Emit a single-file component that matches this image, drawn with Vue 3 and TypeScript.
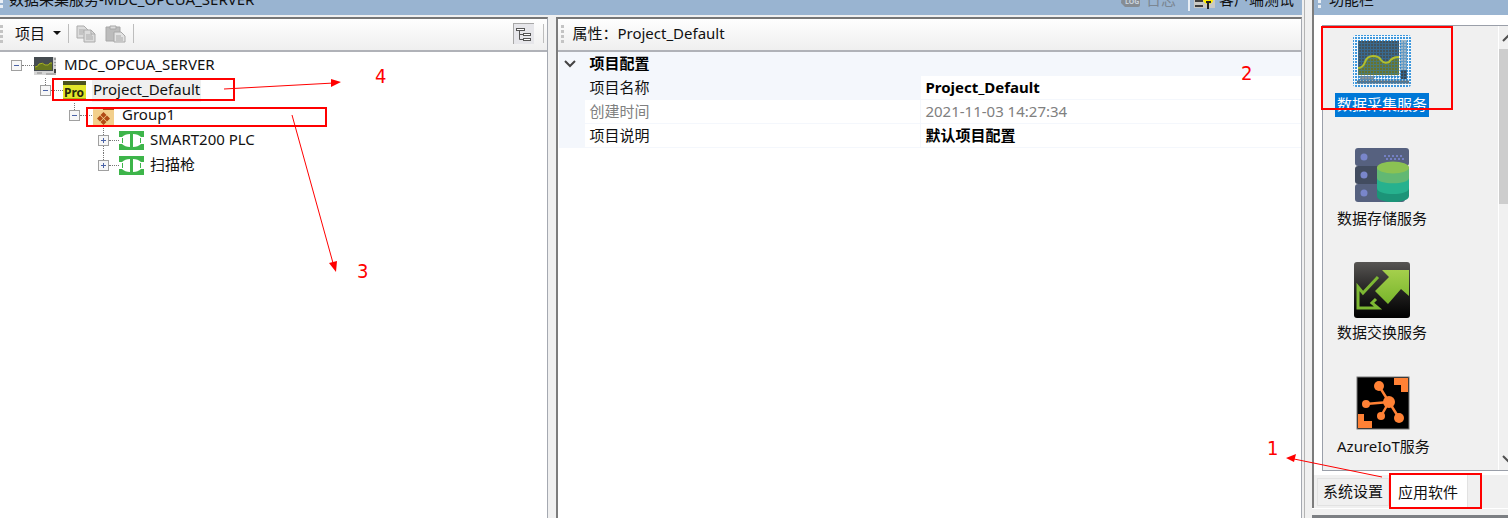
<script setup lang="ts">
import { computed, ref } from 'vue'

interface TreeNode {
  id: string
  label: string
  level: number
  icon: 'server' | 'project' | 'group' | 'device'
  parents: string[]
  hasChildren: boolean
  lineBelow?: boolean
}

interface Service {
  id: string
  label: string
}

const nodes: TreeNode[] = [
  { id: 'server', label: 'MDC_OPCUA_SERVER', level: 0, icon: 'server', parents: [], hasChildren: true },
  { id: 'project', label: 'Project_Default', level: 1, icon: 'project', parents: ['server'], hasChildren: true },
  { id: 'group', label: 'Group1', level: 2, icon: 'group', parents: ['server', 'project'], hasChildren: true },
  { id: 'plc', label: 'SMART200 PLC', level: 3, icon: 'device', parents: ['server', 'project', 'group'], hasChildren: false, lineBelow: true },
  { id: 'scanner', label: '扫描枪', level: 3, icon: 'device', parents: ['server', 'project', 'group'], hasChildren: false },
]

const services: Service[] = [
  { id: 'collect', label: '数据采集服务' },
  { id: 'store', label: '数据存储服务' },
  { id: 'exchange', label: '数据交换服务' },
  { id: 'azure', label: 'AzureIoT服务' },
]

const collapsed = ref<string[]>([])
const selectedNode = ref('project')
const selectedService = ref('collect')
const activeTab = ref('apps')
const configOpen = ref(true)

const visibleNodes = computed(() =>
  nodes.filter((n) => !n.parents.some((p) => collapsed.value.includes(p))),
)

function isOpen(n: TreeNode): boolean {
  return n.hasChildren && !collapsed.value.includes(n.id)
}

function toggle(n: TreeNode): void {
  if (!n.hasChildren) return
  collapsed.value = collapsed.value.includes(n.id)
    ? collapsed.value.filter((id) => id !== n.id)
    : [...collapsed.value, n.id]
}
</script>

<template>
  <div class="page">
    <main class="workspace">
      <header class="titlebar">
        <span class="grip"></span>
        <h1>数据采集服务-MDC_OPCUA_SERVER</h1>
        <button class="title-btn" disabled>
          <svg width="22" height="20" viewBox="0 0 22 20">
            <path d="M2 2h14l4 3v11q0 2-2 2H5l-4-4z" fill="#868c93" />
            <text x="5" y="15" font-size="7" font-weight="700" fill="#c9d2dc">LOG</text>
          </svg>
          <span>日志</span>
        </button>
        <span class="title-sep"></span>
        <button class="title-btn client">
          <svg width="21" height="20" viewBox="0 0 21 20">
            <rect y="0" width="21" height="19" fill="#c9c9c4" />
            <path d="M1 7h8M1 12h8M1 17h8" stroke="#111" stroke-width="1.6" />
            <path d="M9 6h10v6q-1 3-5 3t-5-4z" fill="#ffee00" />
            <path d="M12 13h5M14 13v7" stroke="#222" stroke-width="2" />
          </svg>
          <span>客户端测试</span>
        </button>
      </header>

      <div class="columns">
        <section class="tree-panel">
          <div class="toolbar">
            <span class="grip dark"></span>
            <button class="menu-btn">项目 <span class="caret"></span></button>
            <span class="sep"></span>
            <button class="icon-btn" aria-label="复制" disabled>
              <svg width="20" height="18" viewBox="0 0 20 18" fill="#dcdcdc" stroke="#ababab">
                <path d="M1 1h7l4 4v8H1z" />
                <path d="M3 5h5M3 7h5M3 9h4" />
                <path d="M8 5h7l4 4v8H8z" />
                <path d="M15 5v4h4M10 10h6M10 12h7M10 14h7" fill="none" />
              </svg>
            </button>
            <button class="icon-btn" aria-label="粘贴" disabled>
              <svg width="21" height="18" viewBox="0 0 21 18" fill="#bcbcbc" stroke="#a8a8a8">
                <path d="M1 2h14v14H1z" />
                <path d="M5 1h6v3H5z" fill="#ddd" />
                <path d="M9 7h7l4 4v6H9z" fill="#e3e3e3" />
                <path d="M11 11h5M11 13h7M11 15h7" />
              </svg>
            </button>
            <span class="sep"></span>
            <span class="fill"></span>
            <button class="view-btn" aria-label="树形视图">
              <svg width="18" height="18" viewBox="0 0 18 18" fill="#fff" stroke="#555">
                <path d="M4.500 6v8.500H9M4.500 9.500H9" fill="none" />
                <rect x="1.500" y="3.500" width="8" height="2" />
                <rect x="8.500" y="8.500" width="7" height="2" />
                <rect x="8.500" y="13.500" width="7" height="2" />
              </svg>
            </button>
            <span class="sep last"></span>
          </div>

          <ul class="tree">
            <li v-for="n in visibleNodes" :key="n.id" class="node" :class="'level-' + n.level">
              <span class="joint">
                <span class="vline" :class="{ off: n.level === 0 }"></span>
                <button class="expander" :aria-label="'展开或折叠 ' + n.label" @click="toggle(n)">
                  <svg width="11" height="11" viewBox="0 0 11 11">
                    <path d="M3 5.500h5" stroke="#4b63a7" />
                    <path v-if="!isOpen(n)" d="M5.500 3v5" stroke="#4b63a7" />
                  </svg>
                </button>
                <span class="vline" :class="{ off: !n.lineBelow }"></span>
              </span>
              <span class="hline"></span>
              <svg v-if="n.icon === 'server'" width="25" height="20" viewBox="0 0 25 20">
                <path d="M0 1h22v18H0z" fill="#d4d4d4" />
                <rect x="0" y="1" width="19" height="14" fill="#454b50" />
                <path d="M1 14V11q3 0 4-3q4-2 6 1q4 1 5-2h2v7z" fill="#66751f" />
                <path d="M1 11q3 0 4-3q4-2 6 1q4 1 5-2h2" fill="none" stroke="#a9b51f" />
                <path d="M21 2v2M21 6v1M21 9v1" stroke="#666" />
                <path d="M20 13h2v4h-2z" fill="#444" />
                <path d="M3 17h5M12 18h10" stroke="#888" />
              </svg>
              <svg v-else-if="n.icon === 'project'" width="25" height="20" viewBox="0 0 25 20">
                <rect x="0" y="0" width="23" height="20" rx="1" fill="#e3e72a" />
                <path d="M0 0h23v4H0z" fill="#4d541d" />
                <path d="M0 17h23v3H0z" fill="#a8b021" />
                <text x="1" y="16" font-size="12" font-weight="700" fill="#26280d">Pro</text>
              </svg>
              <svg v-else-if="n.icon === 'group'" width="25" height="20" viewBox="0 0 25 20">
                <rect x="1" y="1" width="21" height="19" fill="#f2cf8c" />
                <path d="M1 1h8l2 3H1z" fill="#ecd8ae" />
                <path d="M11 1h11v3H11z" fill="#a84b16" />
                <path d="M11.500 6l3 3-3 3-3-3zM8 9.500l3 3-3 3-3-3zM15 9.500l3 3-3 3-3-3zM11.500 13l3 3-3 3-3-3z" fill="#b04b15" />
              </svg>
              <svg v-else width="25" height="20" viewBox="0 0 25 20">
                <rect width="25" height="19" fill="#3db54a" />
                <path d="M0 6h3q3-3 8-3v13q-5 0-8-3H0v-1h4v-5H0z" fill="#fff" />
                <path d="M25 6h-3q-3-3-8-3v13q5 0 8-3h3v-1h-4v-5h4z" fill="#fff" />
                <path d="M0 7h3v5H0zM22 7h3v5h-3z" fill="#fff" />
              </svg>
              <button class="node-label" :class="{ selected: n.id === selectedNode }" @click="selectedNode = n.id">{{ n.label }}</button>
            </li>
          </ul>
        </section>

        <section class="props-panel">
          <div class="toolbar">
            <span class="grip dark"></span>
            <h2>属性：Project_Default</h2>
          </div>
          <div class="props-body">
            <table>
              <colgroup>
                <col class="col-gutter" />
                <col class="col-name" />
                <col />
              </colgroup>
              <thead>
                <tr>
                  <th class="gutter">
                    <button class="chevron" aria-label="折叠 项目配置" @click="configOpen = !configOpen">
                      <svg width="12" height="8" viewBox="0 0 12 8"><path d="M1 1l5 5 5-5" fill="none" stroke="#444" stroke-width="2" /></svg>
                    </button>
                  </th>
                  <th colspan="2" class="category">项目配置</th>
                </tr>
              </thead>
              <tbody v-if="configOpen">
                <tr class="current">
                  <td class="gutter"></td>
                  <th scope="row">项目名称</th>
                  <td class="strong">Project_Default</td>
                </tr>
                <tr class="readonly">
                  <td class="gutter"></td>
                  <th scope="row">创建时间</th>
                  <td>2021-11-03 14:27:34</td>
                </tr>
                <tr>
                  <td class="gutter"></td>
                  <th scope="row">项目说明</th>
                  <td class="strong">默认项目配置</td>
                </tr>
              </tbody>
            </table>
          </div>
        </section>
      </div>
    </main>

    <aside class="side">
      <div class="side-panel">
        <header class="titlebar">
          <span class="grip"></span>
          <h2>功能栏</h2>
        </header>
        <div class="service-box">
          <div class="services">
            <button v-for="s in services" :key="s.id" class="service" :class="{ selected: s.id === selectedService }" @click="selectedService = s.id">
              <svg v-if="s.id === 'collect'" width="60" height="56" viewBox="0 0 60 56">
                <defs>
                  <pattern id="dots" width="3" height="3" patternUnits="userSpaceOnUse">
                    <rect width="2" height="2" fill="#3c97dd" />
                  </pattern>
                  <pattern id="mesh" width="3" height="3" patternUnits="userSpaceOnUse">
                    <rect width="1" height="3" fill="#2f7fc0" />
                    <rect width="3" height="1" fill="#2f7fc0" />
                  </pattern>
                </defs>
                <rect x="1" y="1" width="58" height="52" rx="3" fill="#f4f8fb" />
                <rect x="1" y="1" width="58" height="52" rx="3" fill="url(#dots)" />
                <rect x="49" y="6" width="6" height="36" fill="#9fb6c6" />
                <rect x="6" y="7" width="41" height="34" fill="#42535c" />
                <path d="M6 34q5 0 7-6q2-6 8-6q6 0 8 4q3 4 8 2q3-5 10-5v18H6z" fill="#68742b" />
                <rect x="49" y="36" width="6" height="9" fill="#3d474e" />
                <path d="M5 48h52" stroke="#65727a" stroke-width="3" />
                <path d="M8 44h14" stroke="#8c9499" stroke-width="4" />
                <rect x="6" y="7" width="49" height="42" fill="url(#mesh)" opacity="0.500" />
                <path d="M6 34q5 0 7-6q2-6 8-6q6 0 8 4q3 4 8 2q3-5 10-5" fill="none" stroke="#b3c02c" stroke-width="2" />
              </svg>
              <svg v-else-if="s.id === 'store'" width="56" height="56" viewBox="0 0 56 56">
                <rect x="1" y="0" width="54" height="18" rx="3" fill="#56617f" />
                <rect x="1" y="18" width="54" height="18" rx="3" fill="#424c60" />
                <rect x="1" y="36" width="50" height="18" rx="3" fill="#56617f" />
                <g fill="#7986cb">
                  <circle cx="10" cy="9" r="3.500" />
                  <circle cx="10" cy="27" r="3.500" />
                  <circle cx="10" cy="45" r="3.500" />
                </g>
                <path d="M30 8h20M32 11h18" stroke="#7480c4" stroke-width="2" stroke-dasharray="2 2" />
                <path d="M23 40v8c0 8 32 8 32 0v-8z" fill="#1c9478" />
                <path d="M23 30v10c0 8 32 8 32 0V30z" fill="#26b18e" />
                <path d="M23 19v11c0 7 32 7 32 0V19z" fill="#62b873" />
                <ellipse cx="39" cy="19.500" rx="16" ry="6" fill="#8bc253" />
              </svg>
              <svg v-else-if="s.id === 'exchange'" width="56" height="56" viewBox="0 0 56 56">
                <defs>
                  <linearGradient id="tile" x1="0" y1="0" x2="0" y2="1">
                    <stop offset="0" stop-color="#575553" />
                    <stop offset="0.500" stop-color="#252423" />
                    <stop offset="1" stop-color="#000" />
                  </linearGradient>
                  <linearGradient id="leaf" x1="0" y1="0" x2="0" y2="1">
                    <stop offset="0" stop-color="#a5cf4c" />
                    <stop offset="1" stop-color="#77b52b" />
                  </linearGradient>
                </defs>
                <rect width="56" height="56" rx="3" fill="url(#tile)" />
                <path d="M28 8h27v26l-8-7-13 15-13-13 14-14z" fill="url(#leaf)" />
                <path d="M24 15L9 31l-5-6v21h20l-6-5 4-4" fill="none" stroke="#7db833" stroke-width="3" />
              </svg>
              <svg v-else width="56" height="56" viewBox="0 0 56 56">
                <rect x="2" y="1" width="52" height="52" fill="#000" stroke="#777" />
                <g stroke="#ff8135" stroke-width="2.500">
                  <path d="M34 26L24 10M34 26L11 28M34 26L26 40M34 26l10 16" />
                </g>
                <g fill="#ff8135">
                  <circle cx="34" cy="26" r="6" />
                  <circle cx="24" cy="10" r="5" />
                  <circle cx="11" cy="28" r="4" />
                  <circle cx="26" cy="40" r="4" />
                  <circle cx="44" cy="42" r="5" />
                  <path d="M39 2h14v14h-7V9h-7zM3 38h6v7h8v7H3z" />
                </g>
              </svg>
              <span class="service-label">{{ s.label }}</span>
            </button>
          </div>
          <div class="scrollbar">
            <button class="scroll-btn" aria-label="向上滚动">
              <svg width="12" height="8" viewBox="0 0 12 8"><path d="M1 7l5-5 5 5" fill="none" stroke="#505050" stroke-width="2" /></svg>
            </button>
            <div class="thumb"></div>
            <span class="fill"></span>
            <button class="scroll-btn" aria-label="向下滚动">
              <svg width="12" height="8" viewBox="0 0 12 8"><path d="M1 1l5 5 5-5" fill="none" stroke="#505050" stroke-width="2" /></svg>
            </button>
          </div>
        </div>
        <div class="tabs" role="tablist">
          <button role="tab" :class="{ active: activeTab === 'system' }" @click="activeTab = 'system'">系统设置</button>
          <button role="tab" :class="{ active: activeTab === 'apps' }" @click="activeTab = 'apps'">应用软件</button>
        </div>
      </div>
      <div class="next-panel"></div>
    </aside>

    <svg class="notes" aria-hidden="true">
      <g fill="none" stroke="#f00" stroke-width="2">
        <rect x="53" y="79" width="181" height="21" />
        <rect x="87" y="108" width="239" height="18" />
        <rect x="1322" y="27" width="130" height="82" />
        <rect x="1390" y="474" width="91" height="34" />
      </g>
      <g stroke="#f00" fill="#f00">
        <path d="M224 89L334 83M292 115L333 263M1382 477L1294 459" />
        <path d="M341 82l-10-3v8zM336 272l-7-9 8-2zM1286 458l10-4-2 8z" stroke="none" />
      </g>
      <g class="digits" fill="#f00">
        <text x="375" y="83">4</text>
        <text x="357" y="278">3</text>
        <text x="1241" y="80">2</text>
        <text x="1267" y="455">1</text>
      </g>
    </svg>
  </div>
</template>

<style>
body {
  margin: 0;
  overflow: hidden;
}
</style>

<style scoped>
.page {
  position: relative;
  display: flex;
  height: 100vh;
  overflow: hidden;
  background: #f0f0f0;
  color: #111;
  font-family: "Noto Sans", "Noto Sans CJK SC", sans-serif;
  font-size: 15px;
  line-height: 24px;
}
* {
  box-sizing: border-box;
}
button {
  padding: 0;
  border: 0;
  background: none;
  color: inherit;
  font: inherit;
  text-align: left;
  white-space: nowrap;
}
svg {
  display: block;
  flex: none;
}
h1,
h2 {
  margin: 0;
  font-size: 15px;
  font-weight: 400;
  white-space: nowrap;
}
.fill {
  flex: 1;
}
.workspace {
  display: flex;
  flex: 1;
  flex-direction: column;
  min-width: 0;
}
.titlebar {
  display: flex;
  flex: none;
  align-items: center;
  height: 32px;
  margin-top: -17px;
  background: #99b4d1;
}
.workspace > .titlebar {
  margin-right: 2px;
  padding-right: 8px;
}
.titlebar h1 {
  flex: 1;
  padding-left: 6px;
}
.titlebar h2 {
  padding-left: 8px;
}
.grip {
  flex: none;
  width: 3px;
  height: 18px;
  background: repeating-linear-gradient(#e9eff5 0 3px, transparent 3px 5px);
}
.grip.dark {
  background: repeating-linear-gradient(#c4c4c4 0 3px, transparent 3px 5px);
}
.title-btn {
  display: flex;
  gap: 4px;
  align-items: center;
}
.title-btn:disabled {
  color: #7b8793;
}
.title-sep {
  width: 2px;
  height: 24px;
  margin: 0 4px 0 12px;
  background: #e6edf4;
}
.columns {
  display: grid;
  flex: 1;
  grid-template-columns: 548fr 745fr;
  gap: 8px;
  min-height: 0;
  padding-top: 2px;
  padding-right: 2px;
  background: #f0f0f0;
}
.tree-panel,
.props-panel {
  display: flex;
  flex-direction: column;
  min-width: 0;
  border-top: 2px solid #767676;
  border-right: 1px solid #a5a9b1;
  background: #fff;
}
.props-panel {
  border-left: 2px solid #7c7c7c;
}
.toolbar {
  display: flex;
  flex: none;
  align-items: center;
  height: 33px;
  padding-bottom: 2px;
  border-bottom: 2px solid #b0b2b8;
  background: linear-gradient(#fefefe, #efefef);
}
.menu-btn {
  display: flex;
  gap: 8px;
  align-items: center;
  padding: 0 0 2px 12px;
}
.caret {
  border: 4px solid transparent;
  border-top-color: #111;
  border-bottom: 0;
}
.sep {
  width: 1px;
  height: 19px;
  margin: 0 7px;
  background: #bdbdbd;
}
.icon-btn + .icon-btn {
  margin-left: 9px;
}
.sep.last {
  margin: 0 3px 0 9px;
}
.view-btn {
  padding: 1px;
  border-top: 1px solid #a8a8a8;
  border-left: 1px solid #a8a8a8;
  background: #e6e6ea;
}
.props-panel .grip {
  margin-left: 3px;
}
.toolbar h2 {
  padding: 0 0 2px 8px;
}
.tree {
  margin: 0;
  padding: 1px 0 0 11px;
  list-style: none;
}
.node {
  display: flex;
  align-items: center;
  height: 25px;
}
.level-1 {
  padding-left: 29px;
}
.level-2 {
  padding-left: 58px;
}
.level-3 {
  padding-left: 87px;
}
.joint {
  display: flex;
  flex-direction: column;
  align-items: center;
  height: 25px;
}
.vline {
  flex: 1;
  border-left: 1px dotted #777;
}
.vline.off {
  visibility: hidden;
}
.expander {
  width: 11px;
  height: 11px;
  background: #f7f7f7;
  outline: 1px solid #a0a0a0;
  outline-offset: -1px;
}
.hline {
  width: 12px;
  border-top: 1px dotted #777;
}
.level-3 .hline {
  width: 10px;
}
.level-3 .node-label {
  margin-left: 5px;
}
.node-label {
  height: 22px;
  margin-left: 4px;
  padding: 0 1px 3px;
  line-height: 18px;
}
.node-label.selected {
  background: #efefef;
}
.props-body {
  flex: 1;
  padding-left: 1px;
}
table {
  width: 100%;
  border-spacing: 0;
  table-layout: fixed;
}
.col-gutter {
  width: 26px;
}
.col-name {
  width: 336px;
}
th,
td {
  height: 24px;
  padding: 0 0 0 4px;
  border-bottom: 1px solid #f4f7fc;
  font-weight: 400;
  line-height: 23px;
  text-align: left;
  white-space: nowrap;
}
tbody th {
  border-right: 1px solid #f4f7fc;
}
.gutter,
.category,
.current th {
  background: #f4f7fc;
}
.category,
.strong {
  color: #000;
  font-weight: 700;
}
.readonly {
  color: #808080;
}
.chevron {
  display: block;
  padding-left: 1px;
}
.side {
  display: flex;
  flex: none;
  flex-direction: column;
  width: 204px;
  overflow: hidden;
  border-left: 1px solid #b4b4b4;
}
.side-panel {
  display: flex;
  flex: 1;
  flex-direction: column;
  min-height: 0;
  margin-left: 7px;
  border-left: 2px solid #7c7c7c;
  background: #fff;
}
.side .titlebar {
  padding-left: 4px;
}
.service-box {
  display: flex;
  flex: 1;
  min-height: 0;
  margin: 10px -8px 0 8px;
  border: 1px solid #9a9fa9;
  background: #f0f0f0;
  overflow: hidden;
}
.services {
  display: flex;
  flex: 1;
  flex-direction: column;
  gap: 31px;
  align-items: flex-start;
  padding: 8px 0 0 12px;
  border-right: 1px solid #fff;
}
.service {
  display: flex;
  flex: none;
  flex-direction: column;
  gap: 3px;
  align-items: center;
}
.service-label {
  padding: 0 2px 2px;
  line-height: 22px;
}
.service.selected .service-label {
  background: #0078d7;
  color: #fff;
}
.scrollbar {
  display: flex;
  flex-direction: column;
  width: 16px;
}
.scroll-btn {
  padding: 8px 3px 7px;
}
.thumb {
  height: 155px;
  background: #cdcdcd;
}
.tabs {
  display: flex;
  flex: none;
  height: 33px;
  margin-top: 4px;
  background: #f0f0f0;
}
.tabs button {
  align-self: center;
  height: 28px;
  margin-left: 3px;
  padding: 0 5px 2px;
  border: 1px solid #e2e2e2;
  line-height: 22px;
}
.tabs button.active {
  align-self: stretch;
  height: auto;
  margin-left: 1px;
  padding: 0 9px 0 8px;
  border-width: 0 1px 0 0;
  background: #fff;
  line-height: 34px;
}
.next-panel {
  height: 10px;
  margin-left: 7px;
  border-top: 1px solid #fff;
  border-bottom: 3px solid #7c7f83;
}
.notes {
  position: absolute;
  inset: 0;
  width: 100%;
  height: 100%;
  pointer-events: none;
}
.digits {
  font-family: "DejaVu Sans Condensed", "DejaVu Sans", sans-serif;
  font-size: 20px;
}
</style>
